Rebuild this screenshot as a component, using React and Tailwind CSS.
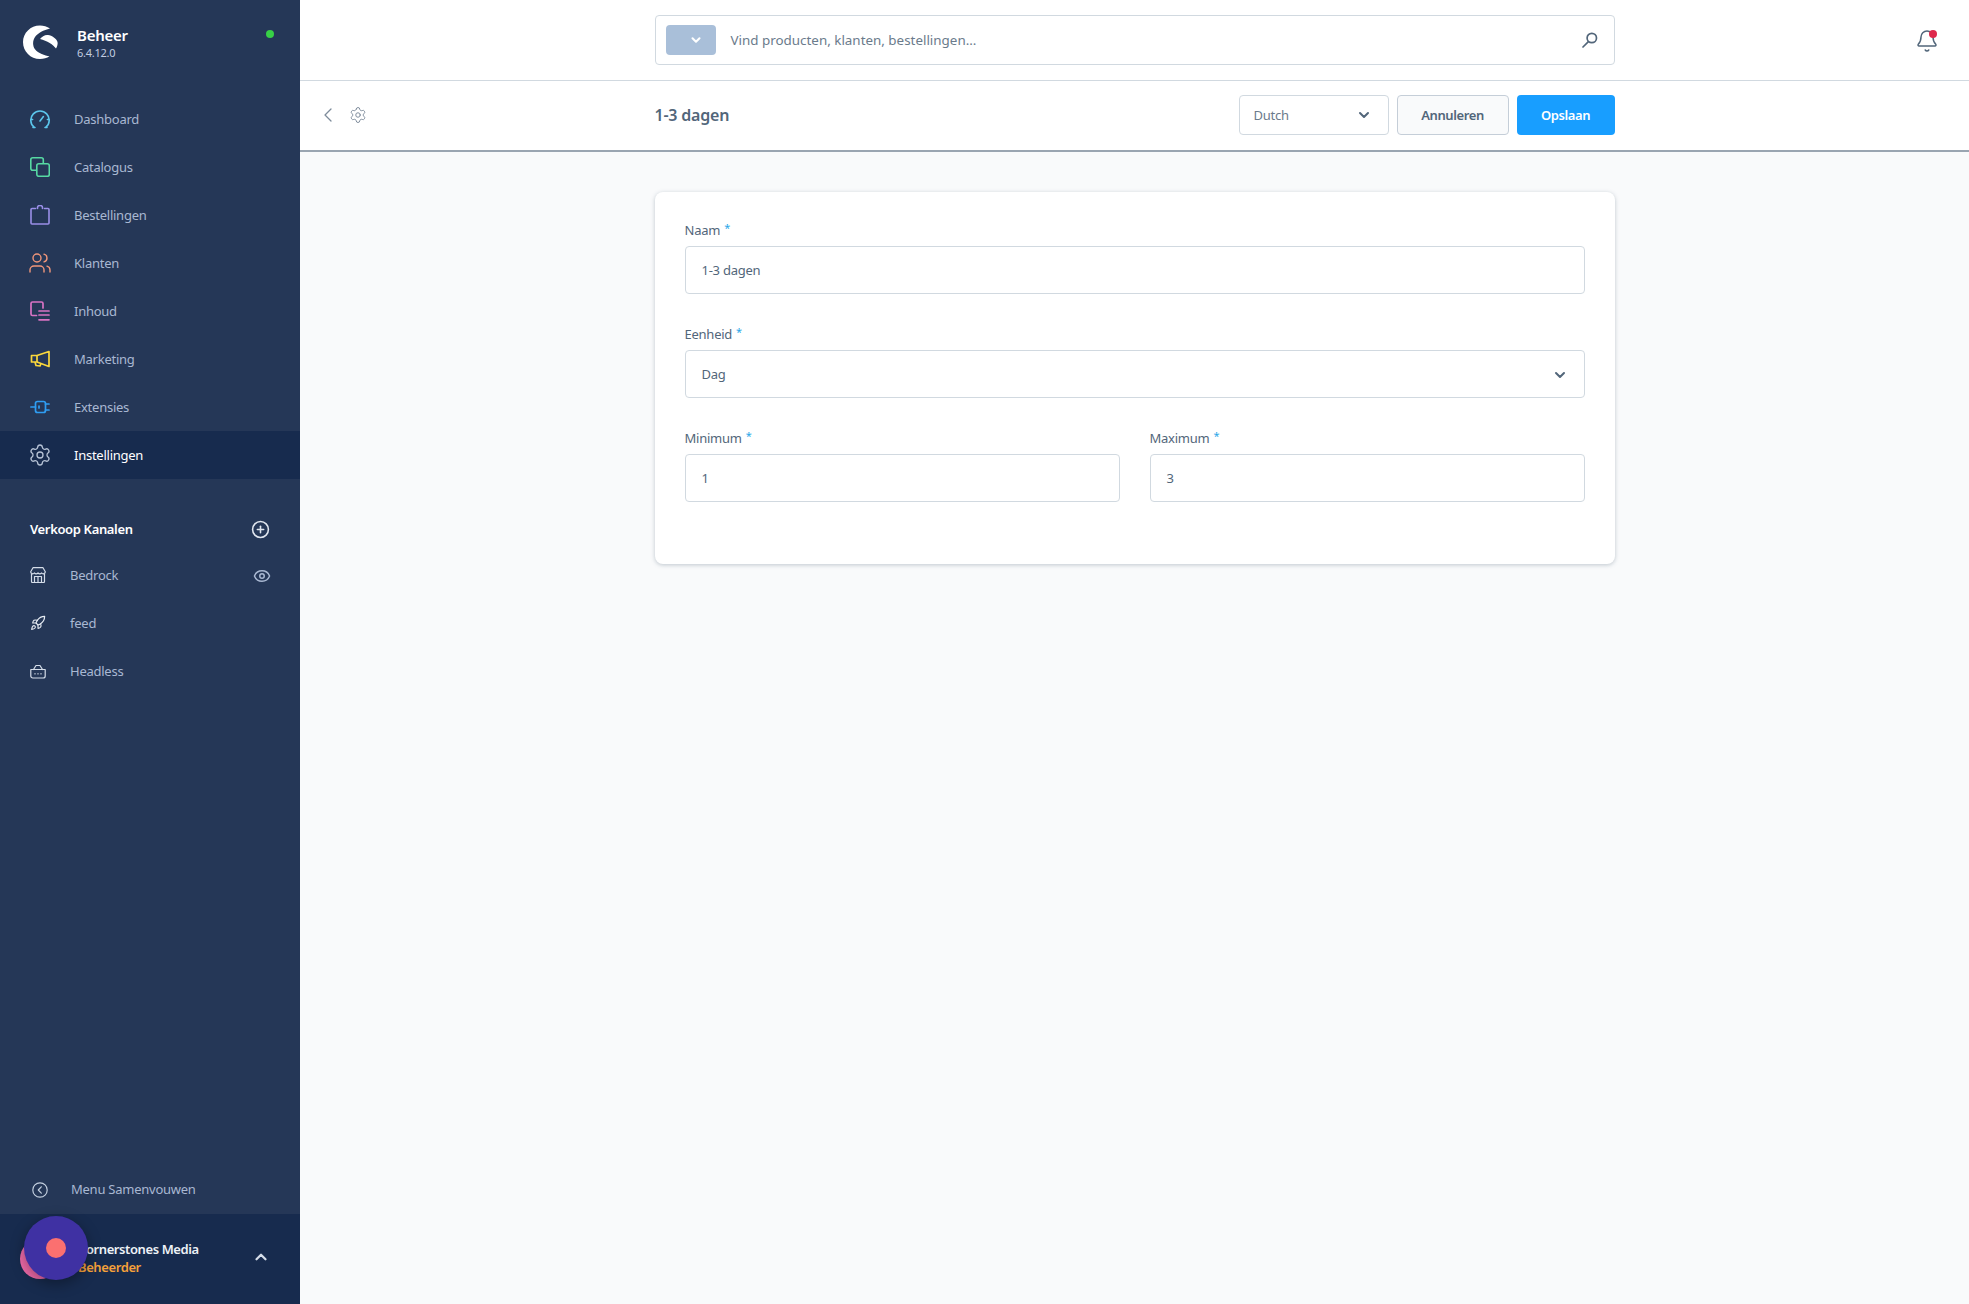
import { ChevronDown, ChevronLeft, ChevronUp, CirclePlus, Eye, Rocket, Settings, Users, Bell } from 'lucide-react'

const font = { fontFamily: '"Noto Sans", sans-serif' }

function GaugeIcon() {
  return (
    <svg width="20" height="20" viewBox="0 0 20 20" fill="none" stroke="#5cc6ec" strokeWidth="1.6" strokeLinecap="round">
      <path d="M4 18.2 A9.2 9.2 0 1 1 16 18.2" />
      <path d="M3 18.5h2M15 18.5h2M10 12l3.4-4.4M1 10.5h1.6M17.4 10.5H19" />
    </svg>
  )
}

function CopyIcon() {
  return (
    <svg width="20" height="20" viewBox="0 0 20 20" fill="none" stroke="#57d9a3" strokeWidth="1.6">
      <rect x="0.8" y="0.8" width="12.5" height="12.5" rx="2" />
      <rect x="6.8" y="6.8" width="12.5" height="12.5" rx="2" fill="#253757" />
    </svg>
  )
}

function BagIcon() {
  return (
    <svg width="20" height="20" viewBox="0 0 20 20" fill="none" stroke="#9a8fe8" strokeWidth="1.6" strokeLinecap="round" strokeLinejoin="round">
      <path d="M5.500 3.500H2a1 1 0 0 0-1 1V18a1 1 0 0 0 1 1h16a1 1 0 0 0 1-1V4.500a1 1 0 0 0-1-1h-3.500" />
      <path d="M7.500 3.500V2.500a2.500 2 0 0 1 5 0v1" />
    </svg>
  )
}

function ContentIcon() {
  return (
    <svg width="20" height="20" viewBox="0 0 20 20" fill="none" stroke="#d873c4" strokeWidth="1.700" strokeLinecap="round">
      <path d="M6.500 14.500H2.500A1.500 1.500 0 0 1 1 13V2.500A1.500 1.500 0 0 1 2.500 1h9A1.500 1.500 0 0 1 13 2.500V7" />
      <path d="M9 10h10M9 14h10M9 18.800h10" />
    </svg>
  )
}

function MegaphoneIcon() {
  return (
    <svg width="20" height="20" viewBox="0 0 20 20" fill="none" stroke="#fbd83c" strokeWidth="1.700" strokeLinejoin="round">
      <path d="M7 6.500 19 2.500v15L7 13H1.500V6.500z" />
      <path d="M7 6.500V13M5 13l1 3.500 4 .5 1-2.500" />
    </svg>
  )
}

function PlugIcon() {
  return (
    <svg width="20" height="20" viewBox="0 0 20 20" fill="none" stroke="#2f9df2" strokeWidth="1.700" strokeLinecap="round">
      <rect x="5.500" y="4.500" width="10" height="11" rx="2" />
      <path d="M0.800 10h4.700M15.500 7h3.500M15.500 13h3.500M9 9v2" />
    </svg>
  )
}

function StoreIcon() {
  return (
    <svg width="16" height="16" viewBox="0 0 16 16" fill="none" stroke="#d5dde9" strokeWidth="1.200" strokeLinejoin="round">
      <path d="M1.500 7v7.500a1 1 0 0 0 1 1h11a1 1 0 0 0 1-1V7" />
      <path d="M3 .700h10l2.300 4a2 2 0 0 1-3.600 1.300 2.500 2.500 0 0 1-3.700 0 2.500 2.500 0 0 1-3.700 0A2 2 0 0 1 .700 4.700z" />
      <path d="M4.500 15.500V9.500h7v6M8 9.500v6" />
    </svg>
  )
}

function BasketIcon() {
  return (
    <svg width="16" height="16" viewBox="0 0 16 16" fill="none" stroke="#d5dde9" strokeWidth="1.200" strokeLinejoin="round" strokeLinecap="round">
      <path d="M.800 6.500h14.400v6.500a2 2 0 0 1-2 2H2.800a2 2 0 0 1-2-2zM3.500 6.500 6 2.500h4l2.500 4" />
      <path d="M5 10.500v.5M8 10.500v.5M11 10.500v.5" />
    </svg>
  )
}

function SearchIcon() {
  return (
    <svg width="16" height="16" viewBox="0 0 16 16" fill="none" stroke="#52667a" strokeWidth="1.700" strokeLinecap="round">
      <circle cx="9.800" cy="6" r="4.700" />
      <path d="M6.400 9.600 1 15" />
    </svg>
  )
}

function Logo() {
  return (
    <svg width="35" height="34" viewBox="0 0 35 34" fill="white">
      <path d="M27 3.500C24 1.500 20.500.5 17 .5 7.500.5 0 8 0 17c0 9.500 7.500 17 17 17 3.500 0 7-1 9.500-2.800-4.500-.7-11.500-3-14.500-7C9.500 21 9.500 15.500 12 12c3-4 8.500-7 15-8.500z" />
      <path d="M17 14c2-2.500 5-4.500 8-4 4 .5 8.500 3.500 9.500 7 .5 2-.3 4.500-1.500 6.500-2.500-3.500-9-8-16-9.500z" />
    </svg>
  )
}

const navItems = [
  { label: 'Dashboard', icon: <GaugeIcon /> },
  { label: 'Catalogus', icon: <CopyIcon /> },
  { label: 'Bestellingen', icon: <BagIcon /> },
  { label: 'Klanten', icon: <Users size={24} strokeWidth={1.400} color="#f0967a" className="shrink-0" /> },
  { label: 'Inhoud', icon: <ContentIcon /> },
  { label: 'Marketing', icon: <MegaphoneIcon /> },
  { label: 'Extensies', icon: <PlugIcon /> },
  { label: 'Instellingen', icon: <Settings size={24} strokeWidth={1.300} color="#b7c3d6" className="shrink-0" />, active: true },
]

function NavItem({ item }) {
  return (
    <div className={`flex h-12 items-center pl-[30px] text-[13px] ${item.active ? 'bg-[#172b4e] text-white' : 'text-[#a9b8d2]'}`}>
      <span className="flex w-5 justify-center">{item.icon}</span>
      <span className="ml-[24px] pt-px">{item.label}</span>
    </div>
  )
}

function ChannelItem({ label, icon, children }) {
  return (
    <div className="flex h-12 items-center pl-[30px] pr-[29px] text-[13px] text-[#a9b8d2]">
      <span className="flex w-4 justify-center">{icon}</span>
      <span className="ml-[24px] flex-1 pt-px">{label}</span>
      {children}
    </div>
  )
}

function Field({ label, className, children }) {
  return (
    <div className={className}>
      <div className="flex h-6 items-start text-[13px] leading-[16px] text-[#52667a]">
        {label}
        <span className="ml-1 text-[11px] leading-[12px] text-[#2aa7e8]">*</span>
      </div>
      <div className="flex h-12 items-center justify-between rounded border border-[#d1d9e0] bg-white pl-4 pr-4 pt-px text-[13px] text-[#52667a]">
        {children}
      </div>
    </div>
  )
}

export default function App() {
  return (
    <div className="relative flex h-screen w-full overflow-hidden bg-[#f9fafb] tracking-[-0.25px]" style={font}>
      <aside className="flex w-[300px] shrink-0 flex-col bg-[#253757]">
        <div className="flex h-[95px] shrink-0 items-start pl-[23px] pr-[26px] pt-[25px]">
          <Logo />
          <div className="ml-[19px] flex-1">
            <div className="text-[15px] font-semibold leading-[20px] text-white">Beheer</div>
            <div className="text-[11px] leading-[16px] text-[#c1cce0]">6.4.12.0</div>
          </div>
          <span className="mt-[5px] h-2 w-2 rounded-full bg-[#37d046]" />
        </div>

        <nav>
          {navItems.map(item => <NavItem key={item.label} item={item} />)}
        </nav>

        <div className="mb-[3px] mt-[32px] flex h-[37px] items-center justify-between pl-[30px] pr-[30px] text-[13px] font-semibold tracking-[-0.35px] text-white">
          Verkoop Kanalen
          <CirclePlus size={19} strokeWidth={2} color="#e0e6ef" />
        </div>
        <ChannelItem label="Bedrock" icon={<StoreIcon />}>
          <Eye size={18} strokeWidth={2} color="#a9b8d2" className="mt-[2px]" />
        </ChannelItem>
        <ChannelItem label="feed" icon={<Rocket size={16} strokeWidth={1.700} color="#e6ebf3" />} />
        <ChannelItem label="Headless" icon={<BasketIcon />} />

        <div className="mt-auto flex h-12 items-center pl-[32px] text-[13px] text-[#a9b8d2]">
          <svg width="16" height="16" viewBox="0 0 16 16" fill="none" stroke="#c3cfdf" strokeWidth="1.200" strokeLinecap="round" strokeLinejoin="round">
            <circle cx="8" cy="8" r="7.200" />
            <path d="M9.300 4.800 6.300 8l3 3.200" />
          </svg>
          <span className="ml-[23px]">Menu Samenvouwen</span>
        </div>
        <div className="flex h-[90px] shrink-0 items-center bg-[#172b4e] pl-[20px] pr-[30px]">
          <span className="h-10 w-10 shrink-0 rounded-full bg-[#ef6aa9]" />
          <div className="ml-[18px] flex-1 pb-[2px] text-[13px] font-semibold leading-[18px] tracking-[-0.4px] text-[#eef2f7]">
            Cornerstones Media
            <div className="text-[#f5a13a]">Beheerder</div>
          </div>
          <ChevronUp size={18} strokeWidth={3} color="#d5dde9" className="mb-[5px]" />
        </div>
      </aside>

      <main className="flex min-w-0 flex-1 flex-col">
        <header className="grid h-[81px] shrink-0 grid-cols-[1fr_960px_1fr] items-center border-b border-[#d1d9e0] bg-white">
          <div />
          <div className="flex h-[50px] items-center rounded border border-[#d1d9e0] pl-[10px] pr-[16px]">
            <span className="flex h-[30px] w-[50px] items-center justify-center rounded bg-[#a9bfd9] pl-[10px]">
              <ChevronDown size={14} strokeWidth={3.500} color="white" />
            </span>
            <span className="ml-[15px] flex-1 pt-px text-[13.4px] tracking-normal text-[#6b7b8c]">Vind producten, klanten, bestellingen...</span>
            <SearchIcon />
          </div>
          <div className="flex justify-end pr-[30px]">
            <span className="relative mt-[2px]">
              <Bell size={24} strokeWidth={1.500} color="#52667a" />
              <span className="absolute right-[2px] top-[1px] h-2 w-2 rounded-full bg-[#de294c]" />
            </span>
          </div>
        </header>

        <div className="grid h-[71px] shrink-0 grid-cols-[1fr_960px_1fr] items-center border-b-2 border-[#9aa5b1] bg-white pb-[1px]">
          <div className="flex items-center gap-[9px] pl-[16px]">
            <ChevronLeft size={24} strokeWidth={1.300} color="#7d8b9a" />
            <Settings size={18} strokeWidth={1.300} color="#7d8b9a" />
          </div>
          <div className="flex items-center justify-between">
            <h1 className="text-[16px] font-semibold tracking-[-0.2px] text-[#52667a]">1-3 dagen</h1>
            <div className="flex gap-2">
              <div className="flex h-10 w-[150px] items-center justify-between rounded border border-[#d1d9e0] bg-white pl-[14px] pr-[16px] text-[13px] text-[#6b7b8c]">
                <span className="pt-px">Dutch</span>
                <ChevronDown size={16} strokeWidth={3} color="#52667a" />
              </div>
              <button className="h-10 w-[112px] rounded border border-[#c5ced8] bg-[#f9fafb] pt-px text-[13px] font-semibold tracking-[-0.4px] text-[#52667a]">Annuleren</button>
              <button className="h-10 w-[98px] rounded bg-[#189eff] pt-px text-[13px] font-semibold tracking-[-0.4px] text-white">Opslaan</button>
            </div>
          </div>
          <div />
        </div>

        <div className="mx-auto mt-10 w-[960px] rounded-lg bg-white px-[30px] pb-[62px] pt-[30px] shadow-[0_1px_4px_rgba(82,102,122,0.35)]">
          <Field label="Naam">1-3 dagen</Field>
          <Field label="Eenheid" className="mt-8">
            Dag
            <ChevronDown size={16} strokeWidth={3} color="#52667a" />
          </Field>
          <div className="mt-8 grid grid-cols-2 gap-[30px]">
            <Field label="Minimum">1</Field>
            <Field label="Maximum">3</Field>
          </div>
        </div>
      </main>

      {/* chat launcher floating over the sidebar footer */}
      <div className="absolute left-[24px] top-[1216px] flex h-16 w-16 items-center justify-center rounded-full bg-[#3f31a3] shadow-[0_4px_14px_rgba(0,0,0,0.35)]">
        <span className="h-5 w-5 rounded-full bg-[#fb7070]" />
      </div>
    </div>
  )
}
